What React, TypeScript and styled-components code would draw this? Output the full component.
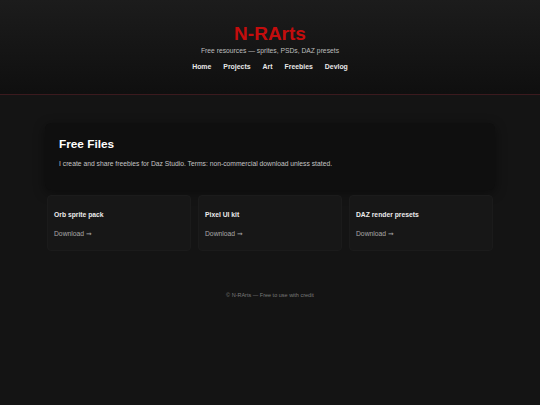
import React, { FC } from 'react';
import styled, { createGlobalStyle } from 'styled-components';

const GlobalStyle = createGlobalStyle`
    html, body {
        margin: 0;
        padding: 0;
        background: #141414;
        color: #e6e6e6;
        font-family: "Liberation Sans", Arial, sans-serif;
    }
`;

const files = [
    { name: 'Orb sprite pack' },
    { name: 'Pixel UI kit' },
    { name: 'DAZ render presets' },
];

const navLinks = ['Home', 'Projects', 'Art', 'Freebies', 'Devlog'];

const App: FC = () => {
    return (
        <Page>
            <GlobalStyle />

            <Header>
                <Title>N-RArts</Title>
                <Tagline>Free resources — sprites, PSDs, DAZ presets</Tagline>
                <Nav>
                    {navLinks.map((link) => (
                        <NavLink key={link} href="#">{link}</NavLink>
                    ))}
                </Nav>
            </Header>

            <Main>
                <Intro>
                    <h2>Free Files</h2>
                    <p>I create and share freebies for Daz Studio. Terms: non-commercial download unless stated.</p>
                </Intro>

                <FileGrid>
                    {files.map((file) => (
                        <FileCard key={file.name}>
                            <h3>{file.name}</h3>
                            <a href="#">Download <Arrow>→</Arrow></a>
                        </FileCard>
                    ))}
                </FileGrid>
            </Main>

            <Footer>© N-RArts — Free to use with credit</Footer>
        </Page>
    );
};

export default App;

const Page = styled.div`
    min-height: 405px;
    background: #141414;
`;

const Header = styled.header`
    height: 95px;
    box-sizing: border-box;
    padding-top: 23px;
    text-align: center;
    background: linear-gradient(#1c1c1c, #0f0f0f);
    border-bottom: 1px solid #3b1a1e;
`;

const Title = styled.h1`
    margin: 0;
    font-size: 19px;
    line-height: 22px;
    font-weight: 700;
    color: #c40d0d;
`;

const Tagline = styled.p`
    margin: 2px 0 0;
    font-size: 6.75px;
    line-height: 8px;
    color: #bdbdbd;
`;

const Nav = styled.nav`
    display: flex;
    justify-content: center;
    gap: 12px;
    margin-top: 7px;
`;

const NavLink = styled.a`
    font-size: 6.9px;
    line-height: 9px;
    font-weight: 700;
    color: #e8e8e8;
    text-decoration: none;
`;

const Main = styled.main`
    width: 450px;
    margin: 28px auto 0;
`;

const Intro = styled.section`
    height: 67px;
    box-sizing: border-box;
    padding: 14px 14px 0;
    background: #0f0f0f;
    border-radius: 6px;
    box-shadow: 0 3px 12px rgba(0, 0, 0, 0.45);

    h2 {
        margin: 0;
        font-size: 11.8px;
        line-height: 14px;
        font-weight: 700;
        color: #ffffff;
    }

    p {
        margin: 8px 0 0;
        font-size: 6.75px;
        line-height: 9px;
        color: #c4c4c4;
    }
`;

const FileGrid = styled.div`
    display: grid;
    grid-template-columns: repeat(3, 1fr);
    gap: 7px;
    margin: 5px 2px 0;
`;

const FileCard = styled.article`
    height: 56px;
    box-sizing: border-box;
    padding: 14px 6px 0;
    background: #171717;
    border: 1px solid #1b1b1b;
    border-radius: 4px;

    h3 {
        margin: 0;
        font-size: 6.75px;
        line-height: 9px;
        font-weight: 700;
        color: #ececec;
    }

    a {
        display: inline-block;
        margin-top: 10px;
        font-size: 6.75px;
        line-height: 9px;
        color: #a8a8a8;
        text-decoration: none;
    }
`;

const Arrow = styled.span`
    font-family: "DejaVu Sans", sans-serif;
`;

const Footer = styled.footer`
    margin-top: 40px;
    text-align: center;
    font-size: 5.5px;
    line-height: 8px;
    color: #7a7a7a;
`;
